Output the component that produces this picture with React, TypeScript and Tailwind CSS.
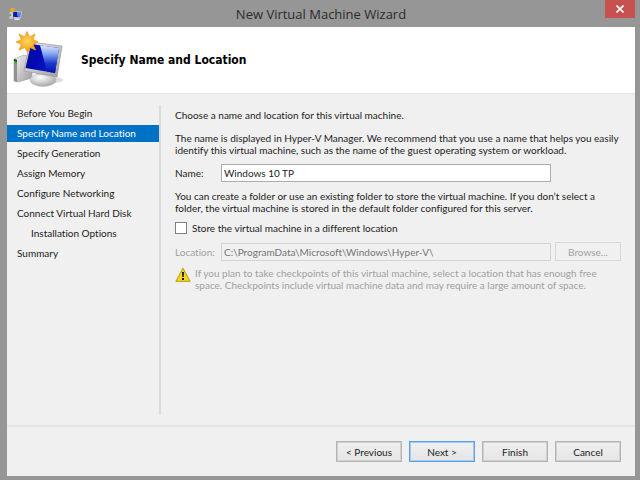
import { useState } from 'react';

interface Step {
  id: string;
  label: string;
  nested?: boolean;
}

const STEPS: Step[] = [
  { id: 'before', label: 'Before You Begin' },
  { id: 'name', label: 'Specify Name and Location' },
  { id: 'generation', label: 'Specify Generation' },
  { id: 'memory', label: 'Assign Memory' },
  { id: 'network', label: 'Configure Networking' },
  { id: 'disk', label: 'Connect Virtual Hard Disk' },
  { id: 'install', label: 'Installation Options', nested: true },
  { id: 'summary', label: 'Summary' },
];

function ComputerIcon() {
  return (
    <svg viewBox="0 0 54 58" className="h-[58px] w-[54px]" aria-hidden="true">
      <defs>
        <linearGradient id="screen" x1="0" y1="0" x2="1" y2="0.3">
          <stop offset="0" stopColor="#0a1480" />
          <stop offset="0.4" stopColor="#0208b4" />
          <stop offset="1" stopColor="#0a1cc0" />
        </linearGradient>
        <linearGradient id="glare" x1="0.5" y1="0" x2="0.5" y2="1">
          <stop offset="0" stopColor="#dce8ff" />
          <stop offset="0.3" stopColor="#88a8f0" />
          <stop offset="0.65" stopColor="#1c38d0" />
          <stop offset="1" stopColor="#0410b0" />
        </linearGradient>
        <linearGradient id="metal" x1="0" y1="0" x2="1" y2="1">
          <stop offset="0" stopColor="#f4f4f4" />
          <stop offset="1" stopColor="#9c9c9c" />
        </linearGradient>
        <radialGradient id="stand" cx="0.4" cy="0.3" r="0.7">
          <stop offset="0" stopColor="#ffffff" />
          <stop offset="1" stopColor="#a8a8a8" />
        </radialGradient>
        <radialGradient id="star" cx="0.5" cy="0.45" r="0.55">
          <stop offset="0" stopColor="#ffd75a" />
          <stop offset="1" stopColor="#f09a10" />
        </radialGradient>
      </defs>
      <ellipse cx="40" cy="49" rx="10" ry="3" fill="#dcdcdc" />
      {/* Tower */}
      <path d="M1 28 L11 24 L19 26 L19 47 L5 51 L1 50 Z" fill="url(#metal)" stroke="#a0a0a0" strokeWidth="0.6" />
      <path d="M1 28 L4 29 L4 51 L1 50 Z" fill="#909090" />
      <path d="M1 28 L4 29 L4 31 L1 30 Z" fill="#303030" />
      <path d="M1 30 L4 31 L4 33 L1 32 Z" fill="#48b020" />
      {/* Monitor */}
      <path d="M24 42 L37 44 L36 50 L25 50 Z" fill="#a8a8a8" />
      <ellipse cx="30" cy="49" rx="13" ry="6.500" fill="url(#stand)" stroke="#b4b4b4" strokeWidth="0.5" />
      <path d="M17 11 L49 15 L44 46 L11 40 Z" fill="url(#metal)" stroke="#989898" strokeWidth="0.7" />
      <path d="M18 13 L46 17 L42 42 L12.500 37 Z" fill="url(#screen)" />
      <path d="M27 14.300 L46 17 L42 42 L34 40.600 Z" fill="url(#glare)" />
      {/* Star */}
      <path
        d="M14 0.500 L16.500 6 L22 3 L20 8.500 L25 11 L20 13.500 L22.500 19 L17 16.500 L14.500 21.500 L12 16.500 L6 19 L8.500 13.500 L3 11 L8.500 8.500 L6 3 L12 6 Z"
        fill="url(#star)"
        stroke="#f0a020"
        strokeWidth="0.8"
      />
    </svg>
  );
}

function SmallComputerIcon() {
  return (
    <svg viewBox="0 0 14 14" className="ml-0.5 h-3.5 w-3.5" aria-hidden="true">
      <rect x="0.500" y="5" width="3" height="7" fill="#c8c8c8" />
      <rect x="0.500" y="7" width="1.500" height="2" fill="#48b020" />
      <ellipse cx="8" cy="12" rx="3" ry="1.200" fill="#d8d8d8" />
      <path d="M3.500 4 L13 4.500 L12 11.500 L3 10.500 Z" fill="#c4c8dc" />
      <path d="M4.300 4.800 L8 5 L9 10.300 L4 9.800 Z" fill="#0818a8" />
      <path d="M8 5 L12 5.300 L11.300 10.600 L9 10.300 Z" fill="#5484e8" />
      <circle cx="3.500" cy="3" r="2.300" fill="#f4a428" />
    </svg>
  );
}

function WarningIcon() {
  return (
    <svg viewBox="0 0 16 16" className="h-4 w-4 shrink-0" aria-hidden="true">
      <path d="M8 1.200 L15 14.300 H1 Z" fill="#f7d91c" stroke="#c9a526" strokeWidth="1.200" strokeLinejoin="round" />
      <path d="M7 5 H9 L8.700 10 H7.300 Z" fill="#181818" />
      <rect x="7" y="11" width="2" height="2" fill="#181818" />
    </svg>
  );
}

const buttonClass =
  'h-[21px] w-[66px] border border-[#b4b4b4] bg-linear-to-b from-[#f0f0f0] to-[#e5e5e5] text-center outline outline-[#d0d0d0] -outline-offset-2';

export default function App() {
  const [name, setName] = useState('Windows 10 TP');
  const [current, setCurrent] = useState('name');
  const [customLocation, setCustomLocation] = useState(false);
  const [location, setLocation] = useState('C:\\ProgramData\\Microsoft\\Windows\\Hyper-V\\');

  return (
    <div className="flex min-h-screen flex-col bg-[#969696] pr-[5px] pb-1 pl-[7px] font-['Lato',sans-serif] text-[10px] leading-3 text-[#1c1c1c] [font-variant-ligatures:none]">
      {/* Title bar */}
      <div className="grid h-[27px] grid-cols-[30px_1fr_30px] items-center">
        <SmallComputerIcon />
        <h1 className="text-center font-['Open_Sans',sans-serif] text-[13px] leading-4 text-[#2c2c2c]">New Virtual Machine Wizard</h1>
        <button aria-label="Close" className="flex h-[18px] items-center justify-center self-start bg-[#c75050]">
          <svg viewBox="0 0 8 8" className="h-2 w-2" aria-hidden="true">
            <path d="M0.500 0.500 L7.500 7.500 M7.500 0.500 L0.500 7.500" stroke="#fff" strokeWidth="1.600" />
          </svg>
        </button>
      </div>

      <div className="flex flex-1 flex-col bg-[#f0f0f0]">
        {/* Header */}
        <header className="flex h-[67px] items-center gap-3.5 border-b border-[#e2e2e2] bg-white pl-1.5">
          <ComputerIcon />
          <h2 className="font-['DejaVu_Sans_Condensed','DejaVu_Sans',sans-serif] text-[12px] leading-4 font-bold text-black">
            Specify Name and Location
          </h2>
        </header>

        <div className="flex flex-1 pt-[11px] pb-2.5">
          {/* Steps */}
          <nav className="w-[154px] shrink-0 border-r-2 border-[#dcdcdc]">
            <ul className="flex flex-col gap-[3px]">
              {STEPS.map((s) => (
                <li key={s.id}>
                  <a
                    href={`#${s.id}`}
                    onClick={() => setCurrent(s.id)}
                    className={`block h-[17px] leading-[17px] whitespace-nowrap ${s.nested ? 'pl-6' : 'pl-2.5'} ${s.id === current ? 'bg-[#0072c6] text-white' : ''}`}
                  >
                    {s.label}
                  </a>
                </li>
              ))}
            </ul>
          </nav>

          {/* Form */}
          <main className="flex flex-1 flex-col pt-1 pr-3.5 pl-3.5">
            <p>Choose a name and location for this virtual machine.</p>
            <p className="mt-[11px]">
              The name is displayed in Hyper-V Manager. We recommend that you use a name that helps you easily
              <br />
              identify this virtual machine, such as the name of the guest operating system or workload.
            </p>
            <div className="mt-2 flex items-center">
              <label htmlFor="vm-name" className="w-[46px]">Name:</label>
              <input
                id="vm-name"
                type="text"
                value={name}
                onChange={(e) => setName(e.target.value)}
                className="mr-[70px] h-[18px] min-w-0 flex-1 border border-[#abadb3] bg-white px-0.5"
              />
            </div>
            <p className="mt-2">
              You can create a folder or use an existing folder to store the virtual machine. If you don’t select a
              <br />
              folder, the virtual machine is stored in the default folder configured for this server.
            </p>
            <label className="mt-2 flex items-center gap-[5px]">
              <input
                type="checkbox"
                checked={customLocation}
                onChange={(e) => setCustomLocation(e.target.checked)}
                className="h-3 w-3 appearance-none border border-[#808080] bg-white checked:bg-[#0072c6]"
              />
              Store the virtual machine in a different location
            </label>
            <div className="mt-2 flex items-center text-[#a0a0a0]">
              <label htmlFor="vm-location" className="w-[46px]">Location:</label>
              <input
                id="vm-location"
                type="text"
                value={location}
                disabled={!customLocation}
                onChange={(e) => setLocation(e.target.value)}
                className="mr-1 h-[18px] min-w-0 flex-1 border border-[#d4d4d4] px-0.5 text-[#747474]"
              />
              <button disabled={!customLocation} className="h-[19px] w-[66px] border border-[#d9d9d9]">Browse...</button>
            </div>
            <div className="mt-1.5 flex gap-1 text-[#a0a0a0]">
              <WarningIcon />
              <p>
                If you plan to take checkpoints of this virtual machine, select a location that has enough free
                <br />
                space. Checkpoints include virtual machine data and may require a large amount of space.
              </p>
            </div>
          </main>
        </div>

        {/* Footer */}
        <footer className="flex h-[51px] justify-end gap-[7px] border-t-2 border-[#e4e4e4] pt-3.5 pr-3.5">
          <button className={buttonClass}>&lt; Previous</button>
          <button className="h-[21px] w-[66px] border border-[#5c9fe8] bg-linear-to-b from-[#f0f0f0] to-[#e5e5e5] text-center outline outline-[#a4cbf4] -outline-offset-2">
            Next &gt;
          </button>
          <button className={buttonClass}>Finish</button>
          <button className={buttonClass}>Cancel</button>
        </footer>
      </div>
    </div>
  );
}
